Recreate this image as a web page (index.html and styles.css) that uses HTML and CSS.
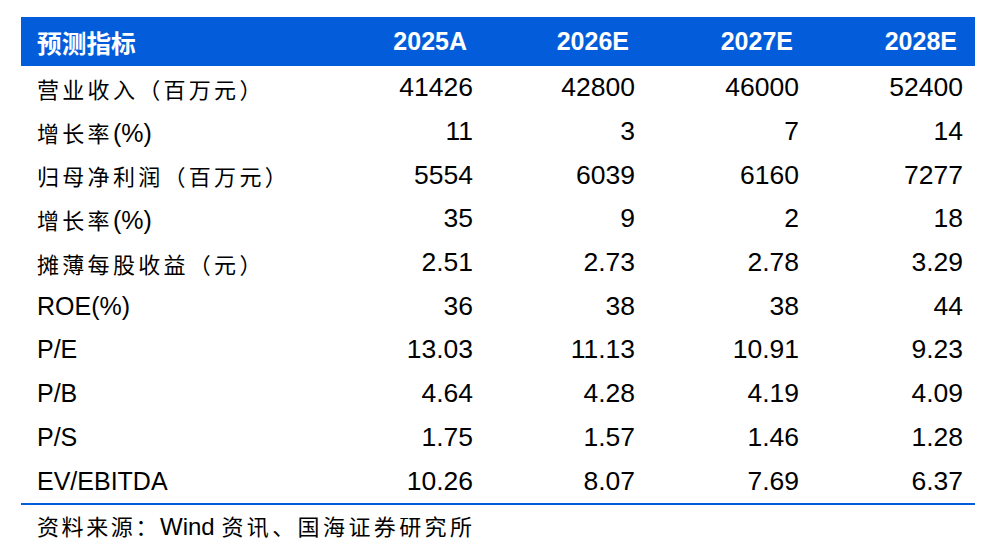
FILE: index.html
```html
<!DOCTYPE html>
<html lang="zh-CN">
<head>
<meta charset="utf-8">
<title>预测指标</title>
<link rel="stylesheet" href="styles.css">
</head>
<body>
<div class="wrap">
  <div class="table">
    <div class="row head">
      <div class="label"><span class="cjk-b">预测指标</span></div>
      <div class="v">2025A</div>
      <div class="v">2026E</div>
      <div class="v">2027E</div>
      <div class="v">2028E</div>
    </div>
    <div class="row">
      <div class="label"><span class="cjk">营业收入（百万元）</span></div>
      <div class="v">41426</div><div class="v">42800</div><div class="v">46000</div><div class="v">52400</div>
    </div>
    <div class="row">
      <div class="label"><span class="cjk">增长率</span>(%)</div>
      <div class="v">11</div><div class="v">3</div><div class="v">7</div><div class="v">14</div>
    </div>
    <div class="row">
      <div class="label"><span class="cjk">归母净利润（百万元）</span></div>
      <div class="v">5554</div><div class="v">6039</div><div class="v">6160</div><div class="v">7277</div>
    </div>
    <div class="row">
      <div class="label"><span class="cjk">增长率</span>(%)</div>
      <div class="v">35</div><div class="v">9</div><div class="v">2</div><div class="v">18</div>
    </div>
    <div class="row">
      <div class="label"><span class="cjk">摊薄每股收益（元）</span></div>
      <div class="v">2.51</div><div class="v">2.73</div><div class="v">2.78</div><div class="v">3.29</div>
    </div>
    <div class="row">
      <div class="label">ROE(%)</div>
      <div class="v">36</div><div class="v">38</div><div class="v">38</div><div class="v">44</div>
    </div>
    <div class="row">
      <div class="label">P/E</div>
      <div class="v">13.03</div><div class="v">11.13</div><div class="v">10.91</div><div class="v">9.23</div>
    </div>
    <div class="row">
      <div class="label">P/B</div>
      <div class="v">4.64</div><div class="v">4.28</div><div class="v">4.19</div><div class="v">4.09</div>
    </div>
    <div class="row">
      <div class="label">P/S</div>
      <div class="v">1.75</div><div class="v">1.57</div><div class="v">1.46</div><div class="v">1.28</div>
    </div>
    <div class="row">
      <div class="label">EV/EBITDA</div>
      <div class="v">10.26</div><div class="v">8.07</div><div class="v">7.69</div><div class="v">6.37</div>
    </div>
  </div>
  <div class="source"><span class="cjk-s">资料来源：</span>Wind <span class="cjk-s wide">资讯、国海证券研究所</span></div>
</div>
</body>
</html>
```

FILE: styles.css
```css
html, body {
  margin: 0;
  padding: 0;
  background: #ffffff;
}
body {
  font-family: "Liberation Sans", Arial, "Noto Sans CJK SC", sans-serif;
  color: #000000;
}
.wrap {
  padding: 17px 21px 0 21px;
  width: 954px;
}
.table {
  display: flex;
  flex-direction: column;
  border-bottom: 2px solid #035ddb;
}
.row {
  display: grid;
  grid-template-columns: 300px 164px 162px 164px 164px;
  height: 43.7px;
  align-items: center;
}
.row .label {
  padding-left: 16px;
  font-size: 25px;
  white-space: nowrap;
}
.row .v {
  text-align: right;
  padding-right: 12px;
  font-size: 26.5px;
}
.row.head {
  background: #035ddb;
  color: #ffffff;
  height: 49px;
}
.row.head .v {
  font-weight: bold;
  font-size: 25px;
  padding-right: 18px;
}
.cjk {
  font-family: "Noto Sans CJK SC", sans-serif;
  font-size: 22px;
  letter-spacing: 3.3px;
}
.cjk-b {
  font-family: "Noto Sans CJK SC", sans-serif;
  font-weight: bold;
  font-size: 24.7px;
}
.source {
  padding-left: 16px;
  height: 42px;
  line-height: 42px;
  font-size: 24px;
  margin-top: -1px;
  white-space: nowrap;
}
.cjk-s {
  font-family: "Noto Sans CJK SC", sans-serif;
  font-size: 22px;
  letter-spacing: 2.6px;
}
.cjk-s.wide {
  letter-spacing: 3.4px;
}
```
